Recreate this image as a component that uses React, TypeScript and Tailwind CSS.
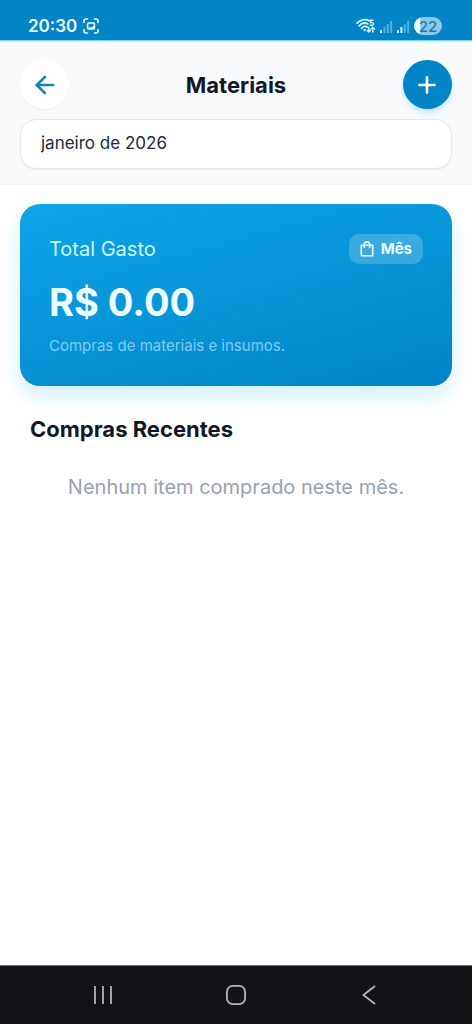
import React, { useState } from 'react';
import { ArrowLeft, Plus } from 'lucide-react';

const BagIcon: React.FC = () => (
  <svg width="14" height="16" viewBox="0 0 14 16" fill="none" stroke="currentColor" strokeWidth="1.6">
    <path d="M1.3 4.2h11.4v10.6H1.3z" strokeLinejoin="round" />
    <path d="M4.3 7V3.6a2.7 2.7 0 0 1 5.4 0V7" />
  </svg>
);

const CaptureIcon: React.FC = () => (
  <svg width="16" height="16" viewBox="0 0 16 16" fill="none" stroke="currentColor" strokeWidth="1.6" strokeLinecap="round">
    <path d="M1 4.5V3a2 2 0 0 1 2-2h1.5M11.5 1H13a2 2 0 0 1 2 2v1.5M15 11.5V13a2 2 0 0 1-2 2h-1.5M4.5 15H3a2 2 0 0 1-2-2v-1.5" />
    <rect x="4.6" y="5" width="6.8" height="6" rx="1" />
    <path d="M5 10.5l2-1.6 1.2.6 2.8-1.7v3H5z" fill="currentColor" stroke="none" />
  </svg>
);

const WifiIcon: React.FC = () => (
  <svg width="20" height="16" viewBox="0 0 20 16" fill="none" stroke="currentColor" strokeLinecap="round">
    <path d="M1 5.2C4.2 1.6 9.4.8 13 2.6" strokeWidth="1.8" />
    <path d="M3.2 7.8C5.4 5.2 9 4.6 11.6 5.8" strokeWidth="1.8" />
    <path d="M5.6 10.2c1.4-1.7 3.6-2.1 5.4-1.3" strokeWidth="1.8" />
    <circle cx="8.6" cy="12" r="1.3" fill="currentColor" stroke="none" />
    <path d="M17 2.2h-2.6v2.4c1.4-.6 2.9 0 2.9 1.3 0 1.4-1.8 2-3.1 1.2" strokeWidth="1.4" />
    <path d="M12.8 9.4V14M11 12.3l1.8 1.8 1.8-1.8M16.8 14V9.4M15 11l1.8-1.8 1.8 1.8" strokeWidth="1.4" />
  </svg>
);

const SignalIcon: React.FC<{ level: number }> = ({ level }) => (
  <svg width="13" height="13" viewBox="0 0 13 13" fill="currentColor">
    {[3, 6, 9, 12].map((h, i) => (
      <rect key={h} x={i * 3.4} y={13 - h} width="2" height={h} rx="0.5" opacity={i < level ? 1 : 0.4} />
    ))}
  </svg>
);

const StatusBar: React.FC = () => (
  <div className="flex h-[41px] items-center justify-between border-b border-sky-300 bg-[#0284c7] pt-3 pr-[30px] pl-7 text-cyan-50">
    <div className="flex items-center gap-[6px]">
      <span className="text-[17px] leading-5 font-semibold">20:30</span>
      <CaptureIcon />
    </div>
    <div className="flex items-center gap-1 text-cyan-100">
      <WifiIcon />
      <SignalIcon level={1} />
      <span className="flex items-center gap-1">
        <SignalIcon level={2} />
        <span className="flex h-[18px] w-7 items-center justify-center rounded-full bg-linear-to-r from-cyan-50 from-20% to-[#8ac6ea] to-25% text-[15px] leading-none font-medium text-[#2679ab]">
          22
        </span>
      </span>
    </div>
  </div>
);

const NavBar: React.FC = () => (
  <nav className="flex h-[59px] items-center justify-between border-t border-gray-500 bg-[#121317] px-[18%] text-[#b4b5b9]">
    <button type="button" aria-label="Recentes" className="p-2">
      <svg width="20" height="20" viewBox="0 0 20 20" fill="none" stroke="currentColor" strokeWidth="1.8">
        <path d="M2 1v18M10 1v18M18 1v18" />
      </svg>
    </button>
    <button type="button" aria-label="Início" className="p-2">
      <svg width="20" height="20" viewBox="0 0 20 20" fill="none" stroke="currentColor" strokeWidth="1.8">
        <rect x="0.9" y="0.9" width="18.2" height="18.2" rx="6" />
      </svg>
    </button>
    <button type="button" aria-label="Voltar ao anterior" className="p-2">
      <svg width="20" height="20" viewBox="0 0 20 20" fill="none" stroke="currentColor" strokeWidth="1.8">
        <path d="M16 1L4.5 10 16 19" />
      </svg>
    </button>
  </nav>
);

const App: React.FC = () => {
  const [month, setMonth] = useState<string>('janeiro de 2026');
  const total = 0;

  return (
    <div className="flex min-h-screen flex-col bg-white font-['Inter',sans-serif] text-gray-900">
      <StatusBar />

      <header className="space-y-[10px] border-b border-gray-100 bg-slate-50 px-5 pt-[19px] pb-[15px]">
        <div className="flex items-center justify-between">
          <button
            type="button"
            aria-label="Voltar"
            className="flex size-[49px] items-center justify-center rounded-full bg-white text-[#1481b8] shadow-xs"
          >
            <ArrowLeft size={28} strokeWidth={2.2} />
          </button>
          <h1 className="text-[22px] leading-7 font-bold">Materiais</h1>
          <button
            type="button"
            aria-label="Adicionar"
            className="flex size-[49px] items-center justify-center rounded-full bg-[#0284c7] text-white shadow-md shadow-sky-200"
          >
            <Plus size={26} strokeWidth={2.4} />
          </button>
        </div>
        <input
          type="text"
          aria-label="Mês"
          value={month}
          onChange={(e) => setMonth(e.target.value)}
          className="block h-[50px] w-full rounded-2xl border border-gray-200 bg-white px-5 pb-[2px] text-[17px] text-gray-800 shadow-xs focus:outline-none"
        />
      </header>

      <main className="flex-1 px-5 pt-[19px] pb-5">
        {/* total */}
        <section className="rounded-[20px] bg-linear-165 from-[#0ea5e9] to-[#0284c7] px-[29px] py-[30px] shadow-[0_10px_20px_rgba(14,165,233,0.18)]">
          <div className="flex items-center justify-between">
            <h2 className="text-xl leading-6 font-normal text-cyan-100">Total Gasto</h2>
            <span className="flex h-[30px] items-center gap-[7px] rounded-[10px] bg-white/20 px-[11px] text-[15px] font-bold text-cyan-50">
              <BagIcon />
              Mês
            </span>
          </div>
          <p className="mt-[14px] text-[38px] leading-12 font-bold text-cyan-50">R$ {total.toFixed(2)}</p>
          <p className="mt-[10px] text-[15px] leading-5 text-[#7dcdf3]">Compras de materiais e insumos.</p>
        </section>

        <h2 className="mt-[27px] px-[10px] text-[22px] leading-8 font-bold">Compras Recentes</h2>
        <p className="mt-7 text-center text-xl leading-7 text-gray-400">Nenhum item comprado neste mês.</p>
      </main>

      <NavBar />
    </div>
  );
};

export default App;
